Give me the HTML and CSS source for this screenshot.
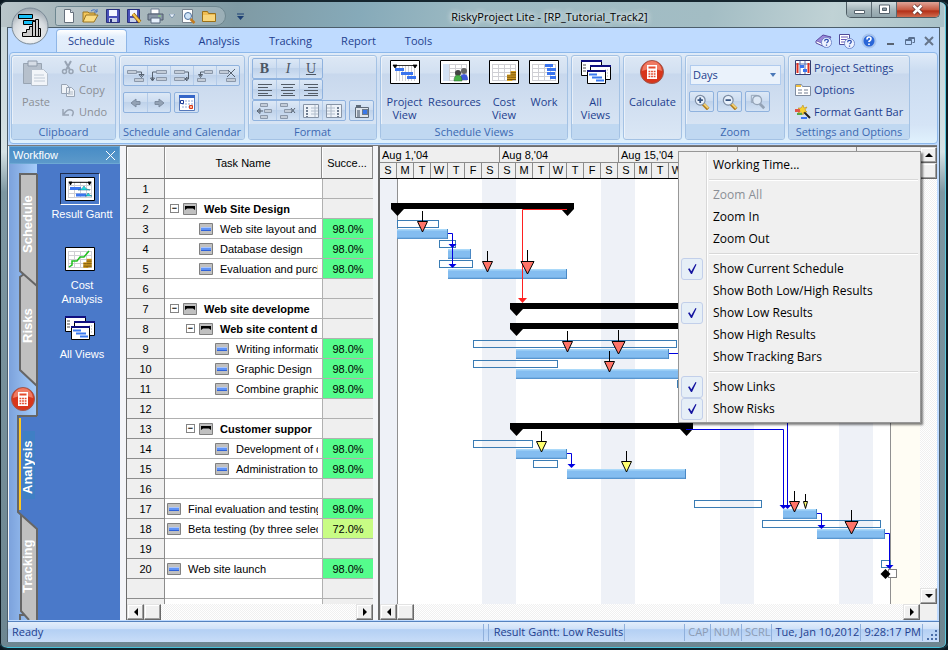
FILE: index.html
```html
<!DOCTYPE html>
<html lang="en">
<head>
  <meta charset="UTF-8" />
  <meta name="viewport" content="width=device-width, initial-scale=1.0" />
  <title>RiskyProject Lite - [RP_Tutorial_Track2]</title>
  <link rel="stylesheet" href="styles.css">
</head>
<body>
  <!-- Shared icons -->
  <svg class="sprite" width="0" height="0" aria-hidden="true">
    <symbol id="i-task" viewBox="0 0 14 12"><path d="M.5.5h13v11H.5z" fill="#c0c0c0" stroke="#808080"/><path d="M2 4h10v4H2z" fill="#5f92f5"/><path d="M2 4h10v1H2z" fill="#a8c6ff"/><path d="M2 7h10v1H2z" fill="#2f62d8"/></symbol>
    <symbol id="i-summary" viewBox="0 0 14 12"><path d="M.5.5h13v11H.5z" fill="#c0c0c0" stroke="#808080"/><path d="M2 3h10v4l-2-1.500H4L2 7z" fill="#000"/></symbol>
    <symbol id="i-calc" viewBox="0 0 24 24"><circle cx="12" cy="12" r="11.5" fill="#d8361c" stroke="#9c5a50"/><path d="M2 11a10 10 0 0 1 20 0q-10-4-20 0z" fill="#ef7a62"/><path d="M7 5h10v14H7z" fill="#fff"/><path d="M8.500 6.500h7v2h-7z" fill="#e4492c"/><path d="M8.500 11.500h7M8.500 14h7M8.500 16.500h7" stroke="#e4492c" stroke-width="1.500" stroke-dasharray="1.800 .8"/></symbol>
    <symbol id="i-views" viewBox="0 0 30 24"><path d="M.5.5h20v15H.5z" fill="#fff" stroke="#000"/><path d="M0 0h21v2H0z" fill="#101080"/><path d="M2 5h3M2 8h3M2 11h3" stroke="#888" stroke-width="1.500"/><path d="M9.500 5.500h20v14h-20z" fill="#fff" stroke="#000"/><path d="M9 5h21v2H9z" fill="#101080"/><path d="M24 10h4M24 13h4M24 16h4" stroke="#aaa" stroke-dasharray="1 1"/><path d="M6.500 10.500h18v13h-18z" fill="#fff" stroke="#000"/><path d="M6 10h19v2H6z" fill="#101080"/><path d="M8 14.500h8M11 17.500h10M15 20.500h8" stroke="#3a7af0" stroke-width="2"/></symbol>
    <symbol id="i-coins" viewBox="0 0 10 12"><path d="M0 5h6v7H0zM4 1h6v10H4z" fill="#e9b02c"/><path d="M0 6.500h4M0 8.500h4M0 10.500h5M4 2.500h6M4 4.500h6M4 6.500h6M4 8.500h6M4 10.500h6" stroke="#6b4a08"/></symbol>
    <symbol id="i-frame" viewBox="0 0 30 24"><path d="M.5.5h29v23H.5z" fill="#fff" stroke="#000"/></symbol>
    <symbol id="i-grid" viewBox="0 0 30 24"><path d="M.5.5h29v23H.5z" fill="#fff" stroke="#000"/><path d="M3 4.500h24M3 8.500h24M3 12.500h24M3 16.500h24M3 20.500h24M3.500 4v17M9.500 4v17M15.500 4v17M21.500 4v17M26.500 4v17" stroke="#cfcfd4" fill="none"/></symbol>
    <symbol id="i-help" viewBox="0 0 12 12"><circle cx="6" cy="6" r="5.500" fill="#eef3ff" stroke="#6d84c8"/><path d="M4 4.500q0-2 2-2t2 1.700q0 1-2 2.300M6 8.300v1.200" fill="none" stroke="#2b4db0" stroke-width="1.400"/></symbol>
    <symbol id="i-lens" viewBox="0 0 18 18"><path d="M10 11l6 6" stroke="#b07c1c" stroke-width="4"/><path d="M10 10l6 6" stroke="#f5d478" stroke-width="2"/><circle cx="7" cy="7" r="5.500" fill="#e8f1fc" stroke="#7d8da4" stroke-width="1.400"/></symbol>
    <symbol id="i-check" viewBox="0 0 12 12"><path d="M2 6l1.500-.7 1.800 3L9.500 1l1 .5L6 11H5z" fill="#1414a0"/></symbol>
    <symbol id="i-left" viewBox="0 0 8 8"><path d="M6 0v8L2 4z"/></symbol>
    <symbol id="i-right" viewBox="0 0 8 8"><path d="M2 0v8l4-4z"/></symbol>
    <symbol id="i-up" viewBox="0 0 8 8"><path d="M0 6h8L4 2z"/></symbol>
    <symbol id="i-down" viewBox="0 0 8 8"><path d="M0 2h8L4 6z"/></symbol>
  </svg>

  <div class="window">
    <header class="titlebar">
      <button class="orb" aria-label="Application menu">
        <svg width="38" height="38" viewBox="0 0 38 38"><defs><radialGradient id="orb" cx=".5" cy=".75" r=".8"><stop offset="0" stop-color="#fff"/><stop offset=".6" stop-color="#d5dade"/><stop offset="1" stop-color="#8e9aa4"/></radialGradient></defs><circle cx="19" cy="19" r="18" fill="url(#orb)" stroke="#7b8b98"/><path d="M7.500 7.500h14v4h-14zM12.500 13.500h11v4h-11z" fill="#16c0f8" stroke="#000"/><path d="M11.500 29.500v-4h4v-3h3v-3h3v10zM21.500 29.500v-15h3v15zM24.500 12.500h3v17h-3zM27.500 21.500h2v8h-2z" fill="#ccc" stroke="#000"/></svg>
      </button>
      <div class="quick">
        <button aria-label="New"><svg width="16" height="16"><path d="M3.500 1.500h6l3 3v10h-9z" fill="#fff" stroke="#66707c"/><path d="M9.500 1.500v3h3" fill="#dde5ee" stroke="#66707c"/></svg></button>
        <button aria-label="Open"><svg width="18" height="16"><path d="M1 14V4h5l1 1h6v3" fill="#f3c65a" stroke="#9a7420"/><path d="M1 14l3-7h12l-4 7z" fill="#fbdd84" stroke="#9a7420"/><path d="M9 3q4-3 6 1m0-3v3h-3" fill="none" stroke="#4874c0"/></svg></button>
        <button aria-label="Save"><svg width="16" height="16"><path d="M1.500 1.500h13v13h-13z" fill="#4a50b8" stroke="#28307c"/><path d="M4 2h8v6H4z" fill="#f3f6ff"/><path d="M4 10h8v4H4z" fill="#c9d2ea"/><path d="M5 11h2v3H5z" fill="#28307c"/></svg></button>
        <button aria-label="Save as"><svg width="16" height="16"><path d="M1.500 1.500h12v13h-12z" fill="#4a50b8" stroke="#28307c"/><path d="M4 2h7v6H4z" fill="#f3f6ff"/><path d="M4 10h6v4H4z" fill="#c9d2ea"/><path d="M7 6l7 8" stroke="#8a5a10" stroke-width="3.500"/><path d="M7 6l7 8" stroke="#f6c64c" stroke-width="2"/></svg></button>
        <button aria-label="Print"><svg width="17" height="16"><path d="M4 1h8v5H4z" fill="#fff" stroke="#6a7a90"/><path d="M1 6h15v6H1z" fill="#8a97a8" stroke="#4f5b6c"/><path d="M4 10h9v5H4z" fill="#e6f0fc" stroke="#5b6a80"/><path d="M11 8h3" stroke="#8fe07c"/></svg></button>
        <button class="tiny" aria-label="Print options"><svg width="6" height="4"><path d="M0 0h6L3 4z" fill="#eaf2fa" stroke="#40628c" stroke-width=".5"/></svg></button>
        <button aria-label="Print preview"><svg width="16" height="16"><path d="M2.500 1.500h10v13h-10z" fill="#fff" stroke="#76808c"/><circle cx="8" cy="8" r="3.500" fill="#cfe4f8" stroke="#4b6f9c"/><path d="M10.500 11l4 4" stroke="#c07a20" stroke-width="2.500"/></svg></button>
        <button aria-label="Folder"><svg width="16" height="16"><path d="M1.500 13.500V3.500h5l1 2h7v8z" fill="#f0bd52" stroke="#9a7018"/><path d="M2 7h12v6H2z" fill="#f8d67c"/></svg></button>
      </div>
      <button class="tiny more" aria-label="Customize"><svg width="7" height="7"><path d="M0 1h7" stroke="#1c3f74"/><path d="M0 3h7L3.500 7z" fill="#1c3f74"/></svg></button>
      <h1 class="title">RiskyProject Lite - [RP_Tutorial_Track2]</h1>
      <div class="caption">
        <button aria-label="Minimize"><svg width="13" height="11"><path d="M1.500 6.500h10v3h-10z" fill="#fff" stroke="#55626c"/></svg></button>
        <button aria-label="Maximize"><svg width="13" height="11"><path d="M1.500 1h10v8.500h-10z" fill="#fff" stroke="#55626c"/><path d="M4.500 4h4v2.500h-4z" fill="#8a9ba4" stroke="#55626c"/></svg></button>
        <button class="close" aria-label="Close"><svg width="13" height="11"><path d="M2.500 1.500l8 8m0-8l-8 8" stroke="#5c3030" stroke-width="4"/><path d="M2.500 1.500l8 8m0-8l-8 8" stroke="#fff" stroke-width="2.500"/></svg></button>
      </div>
    </header>

    <div class="client">
      <nav class="tabs">
        <button class="tab active">Schedule</button>
        <button class="tab">Risks</button>
        <button class="tab">Analysis</button>
        <button class="tab">Tracking</button>
        <button class="tab">Report</button>
        <button class="tab">Tools</button>
        <div class="tab-tools">
          <button aria-label="Help contents"><svg width="18" height="16"><path d="M1 8l7-6 8 2-6 8z" fill="#9a86d8" stroke="#5a4aa0"/><path d="M1 8v2l9 4v-2" fill="#fff" stroke="#5a4aa0"/><use href="#i-help" x="6" y="4" width="11" height="11"/></svg></button>
          <button aria-label="Help on page"><svg width="18" height="16"><path d="M1.500 1.500h10v10h-10z" fill="#fff" stroke="#4f4a98"/><path d="M3 4h7M3 6.500h7M3 9h4" stroke="#6a5ab8"/><use href="#i-help" x="6" y="5" width="11" height="11"/></svg></button>
          <button aria-label="Help"><svg width="16" height="16"><circle cx="8" cy="8" r="6.500" fill="#2a66d8" stroke="#a8c4ec" stroke-width="2"/><path d="M6 6.500q0-2.500 2-2.500t2 2q0 1-2 2.500v.5M8 10.500v1.500" fill="none" stroke="#fff" stroke-width="1.600"/></svg></button>
          <button aria-label="Minimize document"><svg width="10" height="12"><path d="M1 9h7" stroke="#5a6472" stroke-width="2"/></svg></button>
          <button aria-label="Restore document"><svg width="10" height="10"><path d="M3.500 1.500h6v5h-2M.5 3.500h6v5h-6zM3 2.500h6M0 4.500h7" fill="none" stroke="#5a7090"/></svg></button>
          <button aria-label="Close document"><svg width="10" height="10"><path d="M1 1l8 8M9 1L1 9" stroke="#66758a" stroke-width="2"/></svg></button>
        </div>
      </nav>

      <div class="ribbon">
        <section class="group g-clip">
          <div class="group-body split">
            <button class="big" disabled><svg width="28" height="26"><path d="M1.500 3.500h18v20h-18z" fill="#b6c0cc" stroke="#98a4b2"/><path d="M6 1h9v5H6z" fill="#d6dde6" stroke="#8e9aaa"/><path d="M9.500 9.500h12l4 4v12h-16z" fill="#f2f5f9" stroke="#b4bfcc"/><path d="M12 15h10M12 18h11M12 21h11" stroke="#c0cad6"/></svg><span>Paste</span></button>
            <div class="stack">
              <button class="line" disabled><svg width="16" height="16"><path d="M5 1l5 9M11 1l-5 9" stroke="#98a4b4" stroke-width="2"/><circle cx="4.500" cy="11.500" r="2" fill="none" stroke="#98a4b4" stroke-width="1.500"/><circle cx="11" cy="11.500" r="2" fill="none" stroke="#98a4b4" stroke-width="1.500"/></svg>Cut</button>
              <button class="line" disabled><svg width="16" height="16"><path d="M1.500 2.500h5l3 3v6h-8zM6.500 5.500h5l3 3v6h-8z" fill="#eef2f7" stroke="#98a4b4"/><path d="M8 10h5M8 12h5" stroke="#b2bcc8"/></svg>Copy</button>
              <button class="line" disabled><svg width="16" height="16"><path d="M3 5v6h6M4 10q3-5 7-4t1 6" fill="none" stroke="#98a4b4" stroke-width="1.500"/></svg>Undo</button>
            </div>
          </div>
          <h2>Clipboard</h2>
        </section>

        <section class="group g-cal">
          <div class="group-body rows two">
            <div class="bar-row">
              <div class="bar">
                <button aria-label="Link to task"><svg width="18" height="16"><path d="M.5 2.500h9v3h-9zM7.500 10.500h9v3h-9z" class="gi"/><path d="M10 4h4.500v4M12 6.500l2.500 3 2.500-3z" class="gl"/></svg></button>
                <button aria-label="Link start"><svg width="18" height="16"><path d="M6.500 2.500h10v3h-10zM6.500 9.500h10v3h-10z" class="gi"/><path d="M6 4H2.500v8M.5 10l2 3 2-3z" class="gl"/></svg></button>
                <button aria-label="Link finish"><svg width="18" height="16"><path d="M1.500 2.500h10v3h-10zM1.500 9.500h10v3h-10z" class="gi"/><path d="M12 4h3.500v7H12M14 9l-2 2 2 2z" class="gl"/></svg></button>
                <button aria-label="Link back"><svg width="18" height="16"><path d="M8.500 2.500h8v3h-8zM1.500 10.500h8v3h-8z" class="gi"/><path d="M8 4H4.500v4M2.500 6.500l2 3 2-3z" class="gl"/></svg></button>
                <button aria-label="Unlink"><svg width="18" height="16"><path d="M.5 2.500h9v3h-9zM7.500 10.500h9v3h-9z" class="gi"/><path d="M9 2l7 7M16 1L8 9" class="gl"/></svg></button>
              </div>
            </div>
            <div class="bar-row">
              <div class="bar">
                <button aria-label="Outdent"><svg width="18" height="16"><path d="M4 8l5-4v2.500h4v3H9V12z" fill="#93a2b5" stroke="#7d8ca0"/></svg></button>
                <button aria-label="Indent"><svg width="18" height="16"><path d="M14 8L9 4v2.500H5v3h4V12z" fill="#93a2b5" stroke="#7d8ca0"/></svg></button>
              </div>
              <div class="bar">
                <button aria-label="Calendar"><svg width="18" height="16"><path d="M1.500.5h15v15h-15z" fill="#fff" stroke="#5577b8"/><path d="M1 0h16v3H1z" fill="#3566c8"/><path d="M4 6h12M4 9h12M4 12h12" stroke="#8fa8d8" stroke-dasharray="2 1"/><path d="M2.500 5.500h3v3h-3z" fill="#fff" stroke="#1c3c98"/><path d="M11.500 10.500h3v3h-3z" fill="#ffb090" stroke="#d83a18"/></svg></button>
              </div>
            </div>
          </div>
          <h2>Schedule and Calendar</h2>
        </section>

        <section class="group g-format">
          <div class="group-body rows three">
            <div class="bar-row"><div class="bar">
              <button class="letter"><b>B</b></button>
              <button class="letter"><i>I</i></button>
              <button class="letter"><u>U</u></button>
            </div></div>
            <div class="bar-row"><div class="bar">
              <button aria-label="Align left"><svg width="16" height="14"><path d="M1 1.500h14M1 4.500h10M1 7.500h14M1 10.500h10M1 12.500h14" stroke="#525b66"/></svg></button>
              <button aria-label="Align centre"><svg width="16" height="14"><path d="M1 1.500h14M3 4.500h10M1 7.500h14M3 10.500h10M1 12.500h14" stroke="#525b66"/></svg></button>
              <button aria-label="Align right"><svg width="16" height="14"><path d="M1 1.500h14M5 4.500h10M1 7.500h14M5 10.500h10M1 12.500h14" stroke="#525b66"/></svg></button>
            </div></div>
            <div class="bar-row">
              <div class="bar">
                <button aria-label="Insert row"><svg width="18" height="16"><path d="M4.500.5h7v3h-7zM8.500 6.500h7v3h-7zM4.500 12.500h7v3h-7z" class="gi"/><path d="M1 8h6M4 5.500L1 8l3 2.500z" class="gl"/></svg></button>
                <button aria-label="Delete row"><svg width="18" height="16"><path d="M1.500.5h7v3h-7zM5.500 6.500h7v3h-7zM1.500 12.500h7v3h-7z" class="gi"/><path d="M12 5l4 5M16 5l-4 5" class="gl"/></svg></button>
                <button aria-label="Insert column"><svg width="18" height="16"><path d="M1.500 1.500h15v13h-15z" fill="#eef3f9" stroke="#8794a6"/><path d="M9 5h7M9 8h7M9 11h7M13 2v12" stroke="#b0bccb"/><path d="M5 4v10" stroke="#6f7d90" stroke-width="2" stroke-dasharray="2 1"/></svg></button>
                <button aria-label="Delete column"><svg width="18" height="16"><path d="M1.500 1.500h15v13h-15z" fill="#eef3f9" stroke="#8794a6"/><path d="M2 5h8M2 8h8M2 11h8M6 2v12" stroke="#b0bccb"/><path d="M13 4v10" stroke="#6f7d90" stroke-width="2" stroke-dasharray="2 1"/></svg></button>
              </div>
              <div class="bar">
                <button aria-label="Picture"><svg width="18" height="16"><path d="M2.500 4.500h13v10h-13z" fill="#dfe5ec" stroke="#5e6a78"/><path d="M3 2h5v3H3z" fill="#5e6a78"/><path d="M4 7h3v7H4z" fill="#8b97a6"/><path d="M9 6h6v6H9z" fill="#6d7a8a"/><path d="M10 7h4v4h-4z" fill="#3a78e8"/></svg></button>
              </div>
            </div>
          </div>
          <h2>Format</h2>
        </section>

        <section class="group g-views">
          <div class="group-body icons">
            <button class="big"><svg width="30" height="24" viewBox="0 0 30 24"><use href="#i-frame"/><path d="M6.500 6v15M9.500 6v15M12.500 6v15M15.500 6v15M18.500 6v15M21.500 6v15M24.500 6v15" stroke="#d0d0d4"/><path d="M3 5.500h24M3 5h4L5 8zM23 5h4l-2 3z" stroke="#000" stroke-width=".8"/><path d="M5 9.500h9M11 13.500h12M17 17.500h9" stroke="#3a74ee" stroke-width="3"/></svg><span>Project<br>View</span></button>
            <button class="big"><svg width="30" height="24" viewBox="0 0 30 24"><use href="#i-grid"/><path d="M3 4h6v17H3z" fill="#d4e2f4"/><circle cx="18" cy="13" r="3" fill="#444"/><circle cx="24" cy="11" r="3" fill="#666"/><path d="M20 20q0-6 4-6t4 6z" fill="#4058d8"/><path d="M14 21q0-6 4-6t4 6z" fill="#48b048" stroke="#286028" stroke-width=".5"/></svg><span>Resources</span></button>
            <button class="big"><svg width="30" height="24" viewBox="0 0 30 24"><use href="#i-grid"/><use href="#i-coins" x="18" y="10" width="9" height="11"/></svg><span>Cost<br>View</span></button>
            <button class="big"><svg width="30" height="24" viewBox="0 0 30 24"><use href="#i-grid"/><path d="M16 5.500h8M18 9.500h9M18 13.500h8M21 17.500h6" stroke="#3a74ee" stroke-width="3"/></svg><span>Work</span></button>
          </div>
          <h2>Schedule Views</h2>
        </section>

        <section class="group g-all">
          <div class="group-body icons">
            <button class="big"><svg width="30" height="24"><use href="#i-views"/></svg><span>All<br>Views</span></button>
          </div>
          <h2>&nbsp;</h2>
        </section>

        <section class="group g-calc">
          <div class="group-body icons">
            <button class="big"><svg width="24" height="24"><use href="#i-calc"/></svg><span>Calculate</span></button>
          </div>
        </section>

        <section class="group g-zoom">
          <div class="group-body rows two">
            <div class="select-box">
              <select aria-label="Time scale"><option>Days</option><option>Weeks</option><option>Months</option></select>
              <svg class="select-arrow" width="6" height="4"><path d="M0 0h6L3 4z" fill="#4a78b8"/></svg>
            </div>
            <div class="bar-row">
              <div class="bar"><button aria-label="Zoom in"><svg width="16" height="16" viewBox="0 0 18 18"><use href="#i-lens" width="18" height="18"/><path d="M4 7h6M7 4v6" stroke="#34507c" stroke-width="2"/></svg></button></div>
              <div class="bar"><button aria-label="Zoom out"><svg width="16" height="16" viewBox="0 0 18 18"><use href="#i-lens" width="18" height="18"/><path d="M4 7h6" stroke="#34507c" stroke-width="2"/></svg></button></div>
              <div class="bar"><button aria-label="Zoom all"><svg width="16" height="16" viewBox="0 0 18 18"><path d="M1.500 1.500h6v8h-6z" fill="none" stroke="#93a2b5"/><path d="M11 11l5 5" stroke="#93a2b5" stroke-width="3"/><circle cx="8" cy="7" r="5" fill="#dde8f5" stroke="#93a2b5" stroke-width="1.500"/></svg></button></div>
            </div>
          </div>
          <h2>Zoom</h2>
        </section>

        <section class="group g-set">
          <div class="group-body stack">
            <button class="line"><svg width="16" height="16"><path d="M.5.5h15v14H.5z" fill="#fff" stroke="#333c70"/><path d="M1 4h14M5 1v13M10 1v13" stroke="#5a70b0"/><path d="M5 5h4v3H5zM8 9h4v3H8z" fill="#3a74ee"/><path d="M2.500 3v10M13.500 3v10" stroke="#e03020" stroke-width="2"/></svg>Project Settings</button>
            <button class="line"><svg width="16" height="16"><path d="M.5 13.500v-11h6l1 2h8v9z" fill="#fff" stroke="#7f8ca0"/><path d="M1 3h5v2H1z" fill="#f0c040"/><path d="M3 8h4M9 8h4M3 11h4M9 11h4" stroke="#707c90"/></svg>Options</button>
            <button class="line"><svg width="16" height="16"><path d="M6 5l9 9" stroke="#222" stroke-width="2"/><path d="M8 1l1 3 3-1-2 3 2 2-3 0-1 3-2-3-3 1 2-3-2-2h3z" fill="#f6d030" stroke="#b08010" stroke-width=".5"/><path d="M0 5h5v3H0z" fill="#e05848"/><path d="M2 9h5v2H2z" fill="#58a848"/><path d="M6 13h6v2H6z" fill="#3a74ee"/></svg>Format Gantt Bar</button>
          </div>
          <h2>Settings and Options</h2>
        </section>
      </div>

      <main class="workspace">
        <aside class="workflow">
          <div class="workflow-head"><span>Workflow</span><button aria-label="Close workflow"><svg width="11" height="11"><path d="M1 1l9 9M10 1l-9 9" stroke="#fff"/></svg></button></div>
          <div class="workflow-body">
            <div class="strip">
              <svg class="strip-shape" width="29" height="456" viewBox="0 0 29 456">
                <path d="M28 10H11v97l17 15z" fill="#c0c0c0"/><path d="M28 122L15 110l-4 3v93l17 16z" fill="#c0c0c0"/>
                <path d="M28 365L12 351v96l8 9h8z" fill="#c0c0c0"/>
                <path d="M29 252H10v97l19 16z" fill="#4a79c9"/><path d="M14 267h12v68H14z" fill="#3f7fc4"/>
                <path d="M28 10H11v97l17 15M15 110l-4 3v93l17 16M28 10v242M28 252H9v96l19 17v91M12 351v96l8 9M11 456v-5h5" fill="none" stroke="#666" stroke-width="2"/>
                <path d="M11 254v92" stroke="#ffc822" stroke-width="2"/>
              </svg>
              <button class="step s-schedule">Schedule</button>
              <button class="step s-risks">Risks</button>
              <svg class="strip-calc" width="24" height="24"><use href="#i-calc"/></svg>
              <button class="step s-analysis">Analysis</button>
              <button class="step s-tracking">Tracking</button>
            </div>
            <div class="shortcuts">
              <button class="shortcut on"><span class="frame"><svg width="30" height="24"><use href="#i-grid"/><path d="M4 5.500h22M4 5h3l-1.500 3zM23 5h3l-1.500 3z" stroke="#000" stroke-width=".8"/><path d="M5 11.500h11M11 18h10" stroke="#3a74ee" stroke-width="3"/><path d="M13 13q4 0 6-4 2 4 6 4zM20 19q2 0 3-3 2 3 4 3z" fill="#1ce0e0" stroke="#168" stroke-width=".5"/></svg></span>Result Gantt</button>
              <button class="shortcut"><span class="frame"><svg width="30" height="24"><use href="#i-grid"/><path d="M4 20l3-2v-4h5l3-4h4l5-6" fill="none" stroke="#1fc01f" stroke-width="1.500"/><use href="#i-coins" x="18" y="11" width="9" height="10"/></svg></span>Cost<br>Analysis</button>
              <button class="shortcut"><span class="frame"><svg width="30" height="24"><use href="#i-views"/></svg></span>All Views</button>
            </div>
          </div>
        </aside>

        <section class="sheet">
          <div class="sheet-view">
            <table>
              <colgroup><col class="c-num"><col class="c-name"><col class="c-rate"></colgroup>
              <thead><tr><th></th><th>Task Name</th><th>Succe...</th></tr></thead>
              <tbody>
                <tr><th>1</th><td></td><td class="none"></td></tr>
                <tr><th>2</th><td><div class="task sum l1"><button aria-label="Collapse">−</button><svg><use href="#i-summary"/></svg><span>Web Site Design</span></div></td><td class="none"></td></tr>
                <tr><th>3</th><td><div class="task l2"><svg><use href="#i-task"/></svg><span>Web site layout and</span></div></td><td class="high">98.0%</td></tr>
                <tr><th>4</th><td><div class="task l2"><svg><use href="#i-task"/></svg><span>Database design</span></div></td><td class="high">98.0%</td></tr>
                <tr><th>5</th><td><div class="task l2"><svg><use href="#i-task"/></svg><span>Evaluation and purch</span></div></td><td class="high">98.0%</td></tr>
                <tr><th>6</th><td></td><td class="none"></td></tr>
                <tr><th>7</th><td><div class="task sum l1"><button aria-label="Collapse">−</button><svg><use href="#i-summary"/></svg><span>Web site developme</span></div></td><td class="none"></td></tr>
                <tr><th>8</th><td><div class="task sum l2"><button aria-label="Collapse">−</button><svg><use href="#i-summary"/></svg><span>Web site content d</span></div></td><td class="none"></td></tr>
                <tr><th>9</th><td><div class="task l3"><svg><use href="#i-task"/></svg><span>Writing informatio</span></div></td><td class="high">98.0%</td></tr>
                <tr><th>10</th><td><div class="task l3"><svg><use href="#i-task"/></svg><span>Graphic Design</span></div></td><td class="high">98.0%</td></tr>
                <tr><th>11</th><td><div class="task l3"><svg><use href="#i-task"/></svg><span>Combine graphic</span></div></td><td class="high">98.0%</td></tr>
                <tr><th>12</th><td></td><td class="none"></td></tr>
                <tr><th>13</th><td><div class="task sum l2"><button aria-label="Collapse">−</button><svg><use href="#i-summary"/></svg><span>Customer suppor</span></div></td><td class="none"></td></tr>
                <tr><th>14</th><td><div class="task l3"><svg><use href="#i-task"/></svg><span>Development of d</span></div></td><td class="high">98.0%</td></tr>
                <tr><th>15</th><td><div class="task l3"><svg><use href="#i-task"/></svg><span>Administration to</span></div></td><td class="high">98.0%</td></tr>
                <tr><th>16</th><td></td><td class="none"></td></tr>
                <tr><th>17</th><td><div class="task"><svg><use href="#i-task"/></svg><span>Final evaluation and testing</span></div></td><td class="high">98.0%</td></tr>
                <tr><th>18</th><td><div class="task"><svg><use href="#i-task"/></svg><span>Beta testing (by three selec</span></div></td><td class="medium">72.0%</td></tr>
                <tr><th>19</th><td></td><td class="none"></td></tr>
                <tr><th>20</th><td><div class="task"><svg><use href="#i-task"/></svg><span>Web site launch</span></div></td><td class="high">98.0%</td></tr>
                <tr><th></th><td></td><td class="none"></td></tr>
                <tr><th></th><td></td><td class="none"></td></tr>
              </tbody>
            </table>
          </div>
          <div class="scroll-h">
            <button aria-label="Scroll left"><svg width="8" height="8"><use href="#i-left"/></svg></button>
            <span class="thumb"></span>
            <button class="end" aria-label="Scroll right"><svg width="8" height="8"><use href="#i-right"/></svg></button>
          </div>
        </section>

        <section class="gantt">
          <div class="gantt-main">
            <div class="weeks">
              <div class="week"><h3>Aug 1,'04</h3><ol><li>S</li><li>M</li><li>T</li><li>W</li><li>T</li><li>F</li><li>S</li></ol></div>
              <div class="week"><h3>Aug 8,'04</h3><ol><li>S</li><li>M</li><li>T</li><li>W</li><li>T</li><li>F</li><li>S</li></ol></div>
              <div class="week"><h3>Aug 15,'04</h3><ol><li>S</li><li>M</li><li>T</li><li>W</li><li></li><li></li><li></li></ol></div>
              <div class="week"><h3></h3></div>
              <div class="week"><h3></h3></div>
            </div>
            <div class="chart">
              <svg width="900" height="1000">
                <defs>
                  <linearGradient id="bar" x2="0" y2="1"><stop offset="0" stop-color="#b4e0fb"/><stop offset=".25" stop-color="#84bdf0"/><stop offset=".8" stop-color="#84bdf0"/><stop offset="1" stop-color="#4a88c4"/></linearGradient>
                  <path id="drop" d="M0 0h13l-6.500 7z"/>
                  <path id="risk" d="M0-10V0M-5 .5H5L0 11z" stroke="#000"/>
                  <path id="risk-big" d="M0-11V0M-6.500.5h13L0 13z" stroke="#000"/>
                  <path id="head" d="M-4 0h8L0 4z"/>
                </defs>
                <!-- non-working days -->
                <g fill="#eef1f7">
                  <rect width="17" height="1000"/><rect x="102" width="34" height="1000"/><rect x="221" width="34" height="1000"/><rect x="340" width="34" height="1000"/><rect x="459" width="34" height="1000"/>
                </g>
                <rect x="511" width="400" height="1000" fill="#fffdf4"/>
                <path d="M17.500 0v1000M510.500 0v1000" stroke="#909090"/>
                <!-- low results -->
                <g class="low">
                  <rect x="17.500" y="41.500" width="41" height="7"/><rect x="59.500" y="61.500" width="16" height="7"/><rect x="59.500" y="81.500" width="33" height="7"/>
                  <rect x="93.500" y="161.500" width="203" height="7"/><rect x="93.500" y="181.500" width="84" height="7"/><rect x="297.500" y="201.500" width="30" height="7"/>
                  <rect x="93.500" y="261.500" width="59" height="7"/><rect x="153.500" y="281.500" width="24" height="7"/>
                  <rect x="314.500" y="321.500" width="67" height="7"/><rect x="382.500" y="341.500" width="118" height="7"/><rect x="501.500" y="381.500" width="9" height="7"/>
                </g>
                <!-- current schedule -->
                <g fill="url(#bar)">
                  <rect x="17" y="50" width="51" height="10"/><rect x="68" y="70" width="23" height="10"/><rect x="68" y="90" width="119" height="10"/>
                  <rect x="136" y="170" width="153" height="10"/><rect x="136" y="190" width="170" height="10"/>
                  <rect x="136" y="270" width="51" height="10"/><rect x="187" y="290" width="119" height="10"/>
                  <rect x="403" y="330" width="34" height="10"/><rect x="437" y="350" width="68" height="10"/>
                </g>
                <path d="M67.500 50v10M90.500 70v10M186.500 90v10M288.500 170v10M186.500 270v10M305.500 290v10M436.500 330v10M504.500 350v10" stroke="#4a88c4"/>
                <!-- summary bars -->
                <path d="M11 24h183v6H11zM130 124h280v6H130zM130 144h280v6H130zM130 244h183v6H130z"/>
                <use href="#drop" x="11" y="30"/><use href="#drop" x="181" y="30"/><use href="#drop" x="130" y="130"/><use href="#drop" x="130" y="150"/><use href="#drop" x="130" y="250"/><use href="#drop" x="300" y="250"/>
                <!-- links -->
                <g fill="none" stroke="#0000e0"><path d="M68 54.500h4.500V88M289 174.500h16M187 274.500h4.500V288M306 250.500h97.500V327M407.500 180v147M437 334.500h4.500V347M505 354.500h4.500V387"/></g>
                <g fill="#0000e0"><use href="#head" x="72.500" y="65"/><use href="#head" x="72.500" y="85"/><use href="#head" x="191.500" y="285"/><use href="#head" x="403.500" y="326"/><use href="#head" x="407.500" y="326"/><use href="#head" x="441.500" y="346"/><use href="#head" x="509.500" y="386"/></g>
                <path d="M187 30.500h-44.500V120" fill="none" stroke="#ff2020"/><path d="M138 119h9l-4.500 5z" fill="#ff2020"/>
                <!-- risks -->
                <g fill="#ff7468">
                  <use href="#risk" x="42.500" y="42"/><use href="#risk" x="107.500" y="82"/><use href="#risk-big" x="147.500" y="82"/>
                  <use href="#risk" x="187.500" y="162"/><use href="#risk-big" x="238.500" y="162"/><use href="#risk" x="229.500" y="182"/>
                  <use href="#risk" x="414.500" y="322"/><use href="#risk-big" x="471.500" y="342"/>
                </g>
                <g fill="#ffff70"><use href="#risk" x="161.500" y="262"/><use href="#risk" x="246.500" y="282"/><path d="M425.500 315v7M423.500 322.500h4l-2 7z" stroke="#000"/></g>
                <!-- milestone -->
                <rect x="508.500" y="390.500" width="8" height="8" fill="#fff" stroke="#808080"/><path d="M505.500 390l5 5-5 5-5-5z"/>
              </svg>
            </div>
            <div class="scroll-h">
              <button aria-label="Scroll left"><svg width="8" height="8"><use href="#i-left"/></svg></button>
              <span class="thumb"></span>
              <button class="end" aria-label="Scroll right"><svg width="8" height="8"><use href="#i-right"/></svg></button>
            </div>
          </div>
          <div class="scroll-v">
            <button aria-label="Scroll up"><svg width="8" height="8"><use href="#i-up"/></svg></button>
            <span class="thumb"></span>
            <button class="end" aria-label="Scroll down"><svg width="8" height="8"><use href="#i-down"/></svg></button>
            <span class="corner"></span>
          </div>

          <div class="menu">
            <button>Working Time...</button>
            <hr>
            <button disabled>Zoom All</button>
            <button>Zoom In</button>
            <button>Zoom Out</button>
            <hr>
            <label><input type="checkbox" checked><svg width="12" height="12"><use href="#i-check"/></svg>Show Current Schedule</label>
            <label><input type="checkbox"><svg width="12" height="12"><use href="#i-check"/></svg>Show Both Low/High Results</label>
            <label><input type="checkbox" checked><svg width="12" height="12"><use href="#i-check"/></svg>Show Low Results</label>
            <label><input type="checkbox"><svg width="12" height="12"><use href="#i-check"/></svg>Show High Results</label>
            <label><input type="checkbox"><svg width="12" height="12"><use href="#i-check"/></svg>Show Tracking Bars</label>
            <hr>
            <label><input type="checkbox" checked><svg width="12" height="12"><use href="#i-check"/></svg>Show Links</label>
            <label><input type="checkbox" checked><svg width="12" height="12"><use href="#i-check"/></svg>Show Risks</label>
          </div>
        </section>
      </main>

      <footer class="status">
        <span class="ready">Ready</span>
        <span class="slot"></span>
        <span class="view">Result Gantt: Low Results</span>
        <span class="blank"></span>
        <span class="lock">CAP</span>
        <span class="lock">NUM</span>
        <span class="lock">SCRL</span>
        <span>Tue, Jan 10,2012</span>
        <span>9:28:17 PM</span>
        <svg class="grip" width="12" height="12"><path d="M9 1h2v2H9zM5 5h2v2H5zM9 5h2v2H9zM1 9h2v2H1zM5 9h2v2H5zM9 9h2v2H9z" fill="#4a6ea8"/></svg>
      </footer>
    </div>
  </div>
</body>
</html>
```
FILE: styles.css
```css
* { margin: 0; padding: 0; box-sizing: border-box; }
html, body { height: 100%; }
body {
  font: 11px/16px "Open Sans", "Noto Sans", sans-serif;
  background: #0a1720;
  color: #1e3f8f;
  overflow: hidden;
}
button, select {
  font: inherit;
  color: inherit;
  background: none;
  border: none;
}
svg { display: block; flex: none; }
h1, h2, h3 { font: inherit; }
.sprite { position: absolute; }

/* window frame */
.window {
  height: 100vh;
  display: flex;
  flex-direction: column;
  padding: 0 8px 6px 7px;
  background: linear-gradient(#c3d2d7, #d5e2e5 150px, #7d97a2 190px, #6d8691);
  border-top: 2px solid #16262f;
  border-bottom: 2px solid #0e222c;
  border-radius: 7px;
  box-shadow: inset 1px 0 #101c24, inset -2px 0 #101c24, inset -3px 0 #5cc8dc, inset 0 -1px #48c4dc;
}
.titlebar {
  flex: none;
  height: 25px;
  margin: 0 -4px 0 -6px;
  padding: 0 4px 0 54px;
  display: flex;
  align-items: flex-start;
  position: relative;
  background: linear-gradient(100deg, #b9c6ca, #9aabb0 12%, #7f9aa4 25%, #86aab9 38%, #9dbac3 50%, #a3bdc4 75%, #c0d2d5 88%, #a9c2c9);
  border-radius: 6px 6px 0 0;
}
.orb {
  position: absolute;
  left: 10px;
  top: 5px;
  z-index: 2;
}
.quick {
  height: 20px;
  margin-top: 4px;
  padding: 0 8px 0 5px;
  display: flex;
  align-items: center;
  gap: 5px;
  border: 1px solid #6e8790;
  border-radius: 3px 11px 11px 3px;
  background: #ffffff33;
}
.more { margin: 11px 0 0 11px; }
.title {
  flex: 1;
  text-align: center;
  color: #000;
  padding: 7px 0 0 9px;
  text-shadow: 0 0 6px #fff, 0 0 6px #fff;
}
.caption {
  display: flex;
  border: 1px solid #4d5c64;
  border-top: none;
  border-radius: 0 0 5px 5px;
  overflow: hidden;
}
.caption button {
  width: 25px;
  height: 15px;
  padding: 1px 6px;
  background: linear-gradient(#d2dde0, #a5b5ba 50%, #90a4ab);
  border-right: 1px solid #5b6a72;
}
.caption .close {
  width: 42px;
  padding-left: 14px;
  border-right: none;
  background: linear-gradient(#e0a498, #c85c44 50%, #b43018 60%, #cf6c50);
}

.client {
  flex: 1;
  min-height: 0;
  display: flex;
  flex-direction: column;
  border: 1px solid #4c5e6b;
  border-bottom: none;
  background: #bfdbff;
}

/* tabs */
.tabs {
  flex: none;
  height: 24px;
  padding: 1px 5px 0 48px;
  display: flex;
  gap: 5px;
}
.tab { padding: 0 12px; height: 23px; }
.tab.active {
  background: linear-gradient(#fff, #e4effc 30%, #e1ecf9);
  border: 1px solid #8fb6e6;
  border-bottom: none;
  border-radius: 4px 4px 0 0;
  padding: 0 11px;
}
.tab-tools {
  margin-left: auto;
  display: flex;
  align-items: center;
  gap: 9px;
}
.tab-tools button:nth-child(-n+2) { margin-right: -4px; }

/* ribbon */
.ribbon {
  flex: none;
  height: 92px;
  margin: 0 1px;
  padding: 2px 2px 3px 1px;
  display: flex;
  gap: 3px;
  border: 1px solid #8db8ea;
  border-radius: 4px;
  background: linear-gradient(#e0ebf8, #cbdcf1 20%, #d5e4f6 80%, #e0f2fd);
}
.group {
  flex: none;
  display: flex;
  flex-direction: column;
  border: 1px solid #a4c2e4;
  border-radius: 3px;
  background: linear-gradient(#dde8f5, #d2e0f1 20%, #c8d8ed 22%, #dbe7f5);
  box-shadow: inset 1px 1px #ffffff80;
  overflow: hidden;
}
.group h2 {
  height: 15px;
  line-height: 15px;
  text-align: center;
  white-space: nowrap;
  color: #3c69b2;
  background: #c0d8f1;
}
.group-body { flex: 1; }
.g-clip { width: 105px; }
.g-cal { width: 126px; }
.g-format { width: 129px; }
.g-views { width: 188px; }
.g-all { width: 49px; }
.g-calc { width: 59px; }
.g-zoom { width: 100px; }
.g-set { width: 122px; }
.split { display: flex; }
.big {
  display: flex;
  flex-direction: column;
  align-items: center;
  gap: 11px;
  padding-top: 4px;
  line-height: 13px;
}
.split .big { width: 48px; gap: 9px; }
button:disabled { color: #8b8f96; }
.stack {
  display: flex;
  flex-direction: column;
  padding-top: 1px;
}
.line {
  display: flex;
  align-items: center;
  gap: 3px;
  height: 22px;
  white-space: nowrap;
}
.g-set .line { padding-left: 6px; }
.icons {
  display: flex;
  justify-content: center;
}
.g-views .icons {
  display: grid;
  grid-template-columns: 47px 53px 46px 34px;
  justify-content: start;
}
.rows {
  display: flex;
  flex-direction: column;
  padding: 0 3px;
}
.rows.two { gap: 6px; padding-top: 9px; }
.rows.three { padding-top: 2px; }
.bar-row { display: flex; gap: 3px; }
.bar {
  display: flex;
  height: 21px;
  border: 1px solid #8fb2de;
  border-radius: 2px;
  background: linear-gradient(#dce8f6, #ccdcf0 48%, #bfd2ea 50%, #d3e2f4);
}
.bar button {
  width: 23px;
  height: 19px;
  display: flex;
  align-items: center;
  justify-content: center;
}
.bar button + button { border-left: 1px solid #b4cbe8; }
.bar .letter {
  font: 14px/18px "Liberation Serif", serif;
  color: #4c5663;
}
.gi { fill: #c3ccd8; stroke: #8b98aa; }
.gl { fill: none; stroke: #56616f; }
.select-box { display: flex; position: relative; margin: 0 0 0 1px; }
.select-box select {
  appearance: none;
  width: 91px;
  height: 20px;
  padding-left: 2px;
  border: 1px solid #b0cbee;
  background: #eaf2fb;
}
.select-arrow { position: absolute; right: 5px; top: 8px; }

/* workspace */
.workspace {
  flex: 1;
  min-height: 0;
  margin: 1px 2px 0 0;
  padding-left: 1px;
  display: flex;
  background: #f4f5f8;
  border-top: 1px solid #7a7a7a;
}
.workflow {
  flex: none;
  width: 111px;
  margin-right: 6px;
  display: flex;
  flex-direction: column;
  background: #4a79c9;
  font: 11px/14px "Liberation Sans", sans-serif;
  color: #fff;
}
.workflow-head {
  height: 18px;
  padding: 0 3px;
  display: flex;
  align-items: center;
  justify-content: space-between;
  background: linear-gradient(#478cc6, #5c99ca);
  border: 1px solid #6ca8d4;
}
.workflow-body {
  flex: 1;
  min-height: 0;
  display: flex;
  overflow: hidden;
}
.strip {
  width: 28px;
  position: relative;
  display: flex;
  flex-direction: column;
  background: linear-gradient(90deg, #7ca2dc, #a6cdfa);
}
.strip-shape { position: absolute; left: 0; top: 0; }
.strip-calc { position: relative; margin: 0 2px; }
.step {
  position: relative;
  writing-mode: vertical-rl;
  transform: rotate(180deg);
  width: 18px;
  margin-left: 10px;
  font: bold 13px/18px "Liberation Sans", sans-serif;
  flex: none;
}
.s-schedule { height: 120px; }
.s-risks { height: 83px; margin-bottom: 20px; }
.s-analysis { height: 112px; }
.s-tracking { height: 86px; }
.shortcuts {
  flex: 1;
  display: flex;
  flex-direction: column;
  padding: 9px 1px 0 8px;
}
.shortcut {
  display: flex;
  flex-direction: column;
  align-items: center;
  gap: 2px;
  margin-bottom: 5px;
}
.frame { padding: 4px; margin-right: 5px; border: 1px solid transparent; }
.on { margin-bottom: 21px; }
.on .frame { border-color: #1c2c50 #fff #fff #1c2c50; padding: 3px 4px; }

/* task sheet */
.sheet {
  flex: none;
  width: 247px;
  margin-right: 5px;
  display: flex;
  flex-direction: column;
  border-left: 1px solid #6c6c6c;
  border-top: 1px solid #6c6c6c;
  color: #000;
  font: 11px/16px "Liberation Sans", sans-serif;
}
.sheet-view { flex: 1; min-height: 0; overflow: hidden; background: #fff; }
.sheet table {
  width: 100%;
  table-layout: fixed;
  border-collapse: separate;
  border-spacing: 0;
}
.c-num { width: 38px; }
.c-name { width: 157px; }
.sheet th { font-weight: normal; background: #efefef; border-right: 1px solid #8c8c8c; }
.sheet thead th { height: 32px; border-bottom: 1px solid #6c6c6c; box-shadow: inset 1px 1px #fff; }
.sheet tbody th { border-bottom: 1px solid #8c8c8c; }
.sheet td { height: 20px; border-bottom: 1px solid #b0b0b0; }
.sheet td + td { text-align: center; border-left: 1px solid #b0b0b0; }
.none { background: #efefef; }
.high { background: #55fc8c; }
.medium { background: #c8fc84; }
.task {
  display: flex;
  align-items: center;
  margin: 0 4px 0 2px;
  overflow: hidden;
  white-space: nowrap;
}
.task svg { width: 14px; height: 12px; margin-right: 7px; }
.task button {
  width: 9px;
  height: 9px;
  margin-right: 4px;
  flex: none;
  border: 1px solid #848484;
  font-size: 9px;
  line-height: 7px;
}
.l1 { margin-left: 18px; }
.l2 { margin-left: 34px; }
.l3 { margin-left: 50px; }
.sum { font-weight: bold; }
.sum.l1 { margin-left: 5px; }
.sum.l2 { margin-left: 21px; }

/* scroll bars */
.scroll-h, .scroll-v {
  flex: none;
  display: flex;
  background: repeating-conic-gradient(#f0f0f0 0 25%, #fff 0 50%) 0 0 / 2px 2px;
}
.scroll-h { height: 16px; }
.scroll-v { width: 17px; flex-direction: column; }
.scroll-h button, .scroll-v button, .thumb {
  width: 17px;
  height: 16px;
  flex: none;
  display: flex;
  align-items: center;
  justify-content: center;
  background: #f0f0f0;
  border: 1px solid;
  border-color: #e3e3e3 #696969 #696969 #e3e3e3;
  box-shadow: inset -1px -1px #a0a0a0, inset 1px 1px #fff;
}
.scroll-h .end { margin-left: auto; }
.scroll-v .end { margin-top: auto; }
.corner { height: 16px; background: #f0f0f0; }

/* gantt */
.gantt {
  flex: 1;
  min-width: 0;
  display: flex;
  position: relative;
  border-left: 2px solid #6c6c6c;
  border-top: 1px solid #6c6c6c;
  font: 11px/15px "Liberation Sans", sans-serif;
  color: #000;
}
.gantt-main {
  flex: 1;
  min-width: 0;
  display: flex;
  flex-direction: column;
}
.weeks {
  flex: none;
  height: 32px;
  display: flex;
  overflow: hidden;
  background: #efefef;
  border-bottom: 1px solid #000;
}
.week { flex: none; width: 119px; }
.week h3 {
  height: 16px;
  padding-left: 2px;
  line-height: 16px;
  border-bottom: 1px solid #8c8c8c;
}
.week + .week h3 { border-left: 1px solid #8c8c8c; }
.week ol { display: flex; list-style: none; }
.week li {
  width: 17px;
  height: 15px;
  text-align: center;
  border-right: 1px solid #8c8c8c;
}
.chart { flex: 1; min-height: 0; overflow: hidden; background: #fff; }
.low rect { fill: none; stroke: #3a7cb4; }

/* context menu */
.menu {
  position: absolute;
  right: 16px;
  top: 4px;
  width: 243px;
  padding: 2px;
  color: #000;
  font: 12px/22px "Open Sans", "Noto Sans", sans-serif;
  background: linear-gradient(90deg, #f1f1f1 27px, #d8d8d8 27px, #d8d8d8 28px, #fff 28px, #fff 29px, #f0f0f0 29px);
  border: 1px solid #979797;
  box-shadow: 2px 2px 2px #00000080;
}
.menu button, .menu label {
  position: relative;
  display: block;
  width: 100%;
  height: 22px;
  padding-left: 32px;
  text-align: left;
}
.menu hr {
  height: 8px;
  margin-left: 28px;
  border: none;
  background: linear-gradient(transparent 3px, #d8d8d8 3px, #d8d8d8 4px, #fff 4px, #fff 5px, transparent 5px);
}
.menu input {
  appearance: none;
  position: absolute;
  left: 0;
  top: 0;
  width: 22px;
  height: 22px;
  border-radius: 3px;
}
.menu input:checked { background: #e6eff7; border: 1px solid #c2cfea; }
.menu label svg { display: none; position: absolute; left: 5px; top: 5px; }
.menu input:checked + svg { display: block; }

/* status bar */
.status {
  flex: none;
  height: 21px;
  margin-top: 1px;
  display: flex;
  align-items: center;
  white-space: nowrap;
  border-top: 1px solid #5683bf;
  background: linear-gradient(#e3eefb, #cfe1f8 35%, #b4d0f4 38%, #c8ddf8);
}
.status span {
  height: 17px;
  padding: 0 1px 0 3px;
  border-right: 1px solid #8fb0dc;
}
.status .ready { flex: 1; padding-left: 4px; }
.status .slot { width: 5px; padding: 0; }
.status .view { padding-left: 5px; }
.status .blank { width: 60px; }
.status .lock { color: #8c9cb4; }
.grip { margin: 6px 1px 0 3px; }
```
